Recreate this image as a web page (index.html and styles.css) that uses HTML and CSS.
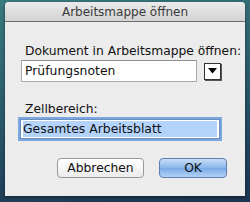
FILE: index.html
```html
<!DOCTYPE html>
<html>
<head>
<meta charset="utf-8">
<link rel="stylesheet" href="styles.css">
</head>
<body>
<div class="dialog">
  <div class="titlebar">Arbeitsmappe öffnen</div>
  <div class="content">
    <div class="label label-doc">Dokument in Arbeitsmappe öffnen:</div>
    <div class="row">
      <div class="field">Prüfungsnoten</div>
      <div class="dropbtn"><svg width="9" height="6" viewBox="0 0 9 6"><polygon points="0,0 9,0 4.5,5.5" fill="#000"/></svg></div>
    </div>
    <div class="label label-range">Zellbereich:</div>
    <div class="field field-focus"><span class="sel">Gesamtes Arbeitsblatt</span></div>
    <div class="buttons">
      <div class="btn">Abbrechen</div>
      <div class="btn btn-default">OK</div>
    </div>
  </div>
</div>
</body>
</html>
```
FILE: styles.css
```css
html, body {
  margin: 0;
  padding: 0;
}
body {
  width: 250px;
  height: 202px;
  overflow: hidden;
  background: linear-gradient(170deg, #3a7a80 0%, #2c5e6c 40%, #20405a 80%, #1b3450 100%);
  font-family: "DejaVu Sans", sans-serif;
  padding: 2px 5px 0 5px;
  box-sizing: border-box;
}
.dialog {
  width: 240px;
  height: 194px;
  background: #ececec;
  border-radius: 4px 4px 0 0;
  overflow: hidden;
  box-shadow: 0 1px 3px rgba(0,0,0,0.5);
}
.titlebar {
  height: 19px;
  border-bottom: 1px solid #6e6e6e;
  background: linear-gradient(#ebebeb, #d2d2d2);
  text-align: center;
  font-size: 12px;
  line-height: 20px;
  color: #3a3a3a;
}
.content {
  padding: 22px 0 0 15px;
  display: flex;
  flex-direction: column;
}
.label {
  font-size: 12.3px;
  color: #111;
  line-height: 14px;
  padding-left: 5px;
}
.row {
  display: flex;
  align-items: center;
  margin-top: 2px;
  margin-left: 1px;
}
.field {
  width: 171px;
  height: 20px;
  background: #fff;
  border: 1px solid #a9a9a9;
  border-top-color: #8e8e8e;
  font-size: 12.4px;
  line-height: 20px;
  padding-left: 3px;
  box-sizing: content-box;
  color: #111;
}
.dropbtn {
  width: 15px;
  height: 15px;
  margin-left: 7px;
  border: 1px solid #333;
  background: #fff;
  box-shadow: 1px 1px 0 #555;
  display: flex;
  align-items: center;
  justify-content: center;
}
.label-range {
  margin-top: 20px;
}
.field-focus {
  width: 196px;
  height: 18px;
  margin-top: 3px;
  padding-left: 2px;
  border: 1px solid #6a8fbf;
  box-shadow: 0 0 0 2px #7aa7e0;
  background: #fff;
  line-height: 18px;
}
.sel {
  display: inline-block;
  background: #b3d3fb;
  width: 194px;
  line-height: 16px;
  margin-top: 1px;
  vertical-align: top;
}
.buttons {
  display: flex;
  margin-top: 19px;
  padding-left: 37px;
  gap: 15px;
}
.btn {
  width: 85px;
  height: 18px;
  border: 1px solid #999;
  border-radius: 4px;
  background: linear-gradient(#ffffff, #ececec);
  font-size: 12.3px;
  line-height: 18px;
  text-align: center;
  color: #111;
}
.btn-default {
  width: 66px;
  border-color: #5e7fb0;
  background: linear-gradient(#c9dcf5, #8ab6ec 50%, #7aaae8 51%, #b4d2f6);
}
```
